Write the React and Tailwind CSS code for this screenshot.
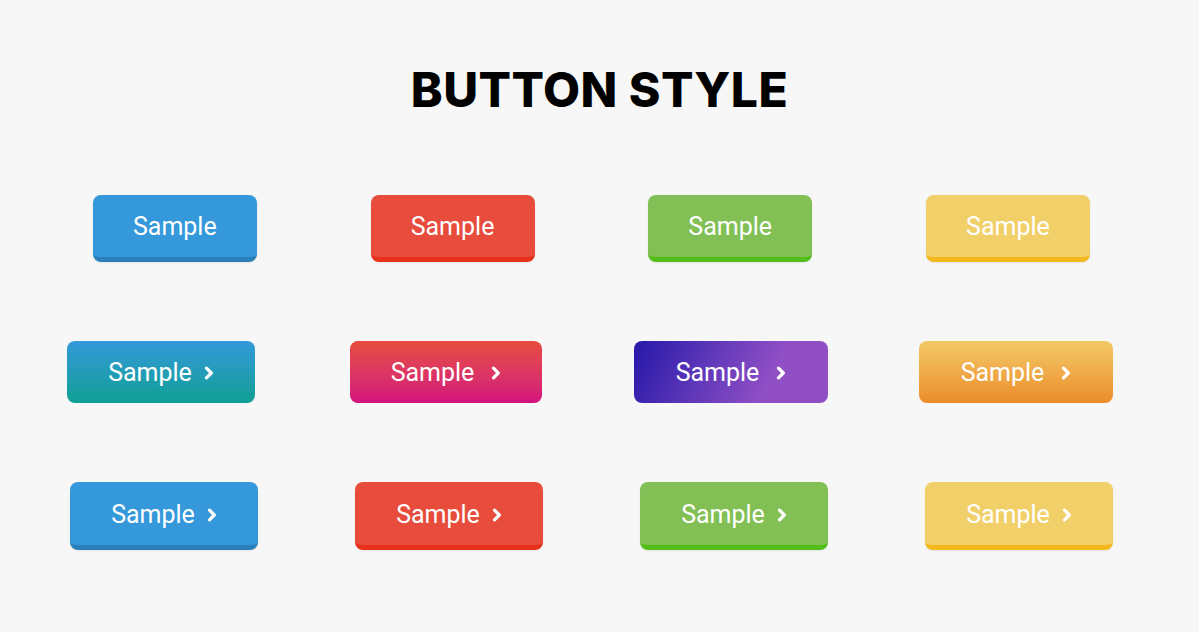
import React from 'react';

const flat = [
    { bg: 'bg-[#3498db]', border: 'border-[#2a80b9]' },
    { bg: 'bg-[#e74c3c]', border: 'border-[#e8301c]' },
    { bg: 'bg-[#82c055]', border: 'border-[#52be18]' },
    { bg: 'bg-[#f1d06a]', border: 'border-[#f4b81c]' },
];

const gradients = [
    { bg: 'bg-gradient-to-b from-[#3498db] to-[#0f9f93]', w: 'w-[188px]', gap: 'gap-3' },
    { bg: 'bg-gradient-to-b from-[#e74c3c] to-[#d30f7c]', w: 'w-[192px]', gap: 'gap-[17px]' },
    { bg: 'bg-[linear-gradient(115deg,#2d1cab_5%,#5c36b8_35%,#914fc6_70%)]', w: 'w-[194px]', gap: 'gap-[17px]' },
    { bg: 'bg-gradient-to-b from-[#f2ca66] to-[#eb8c29]', w: 'w-[194px]', gap: 'gap-[17px]' },
];

function Chevron() {
    return (
        <svg viewBox="0 0 10 14" className="w-[10px] h-[14px]" fill="none" stroke="currentColor" strokeWidth="3.2" strokeLinecap="round" strokeLinejoin="round">
            <polyline points="2.5,2.2 7.3,7 2.5,11.8" />
        </svg>
    );
}

function Label({ arrow, gap = 'gap-3' }) {
    return (
        <span className={`flex items-center ${gap} translate-y-[1px]`}>
            <span>Sample</span>
            {arrow && <Chevron />}
        </span>
    );
}

export default function App() {
    return (
        <main className="min-h-[632px] bg-[#f7f7f7] font-['Roboto',sans-serif] text-white">
            <h1 className="pt-[62px] text-center font-['Inter',sans-serif] text-[48px] leading-[56px] font-extrabold text-black tracking-[0.5px]">
                BUTTON STYLE
            </h1>

            {/* plain buttons with bottom edge */}
            <div className="mt-[77px] ml-[36px] grid grid-cols-[repeat(4,277.7px)] justify-items-center">
                {flat.map((b, i) => (
                    <button key={i} className={`w-[164px] h-[67px] rounded-lg border-b-[5px] ${b.bg} ${b.border} text-[25px] shadow-[0_1px_2px_rgba(0,0,0,0.08)] flex items-center justify-center`}>
                        <Label />
                    </button>
                ))}
            </div>

            {/* gradient buttons */}
            <div className="mt-[79px] ml-[18.5px] grid grid-cols-[repeat(4,285px)] justify-items-center">
                {gradients.map((b, i) => (
                    <button key={i} className={`${b.w} h-[62px] rounded-lg ${b.bg} text-[25px] flex items-center justify-center`}>
                        <Label arrow gap={b.gap} />
                    </button>
                ))}
            </div>

            {/* edge buttons with arrow */}
            <div className="mt-[79px] ml-[21.5px] grid grid-cols-[repeat(4,285px)] justify-items-center">
                {flat.map((b, i) => (
                    <button key={i} className={`w-[188px] h-[68px] rounded-lg border-b-[5px] ${b.bg} ${b.border} text-[25px] shadow-[0_1px_2px_rgba(0,0,0,0.08)] flex items-center justify-center`}>
                        <Label arrow gap="gap-3" />
                    </button>
                ))}
            </div>
        </main>
    );
}
